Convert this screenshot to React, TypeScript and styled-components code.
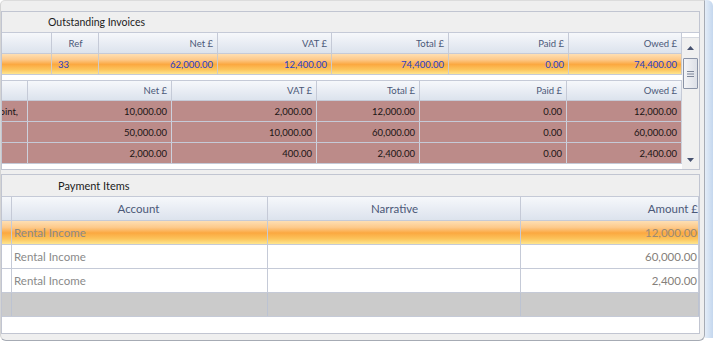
import React from 'react';
import styled, { createGlobalStyle } from 'styled-components';

type Kind = 'head' | 'sel' | 'plain' | 'rose' | 'blank';
type Align = 'left' | 'right' | 'center';

const line = '#c5cad7';

const backgrounds: Record<Kind, string> = {
  head: 'linear-gradient(#f6f8fb 0%, #e9edf4 50%, #dce3ed 100%)',
  sel: 'linear-gradient(#fedfb3 0%, #fdc98a 28%, #fba840 52%, #fcc45c 78%, #fee58f 100%)',
  plain: '#ffffff',
  rose: '#bc8b89',
  blank: '#cbcbcb',
};

const GlobalStyle = createGlobalStyle`
  html, body { margin: 0; padding: 0; background: #ffffff; }
  body { font-family: Lato, "Open Sans", sans-serif; }
`;

const Frame = styled.div`
  width: 713px;
  height: 342px;
  display: flex;
  align-items: flex-start;
  overflow: hidden;
  background: #ffffff;
`;

const Window = styled.div`
  box-sizing: border-box;
  width: 705px;
  height: 341px;
  background: #efefef;
  border-top: 1px solid #dcdcdc;
  border-left: 1px solid #d4d4d4;
  border-right: 1px solid #a6abb4;
  border-bottom: 1px solid #a6abb4;
  border-radius: 5px 0 6px 6px;
  padding: 10px 4px 0 0;
  display: flex;
  flex-direction: column;
`;

const SideStrip = styled.div`
  width: 8px;
  height: 338px;
  background: linear-gradient(90deg, #e4edf8, #c4d7ee);
  border-top-right-radius: 6px;
`;

const Group = styled.section<{ $h: number; $gap?: number }>`
  box-sizing: border-box;
  width: 699px;
  height: ${p => p.$h}px;
  margin-top: ${p => p.$gap ?? 0}px;
  border: 1px solid #c1c5d1;
  background: #efefef;
  display: flex;
  flex-direction: column;
`;

const GroupTitle = styled.div<{ $h: number; $indent: number; $size: number }>`
  height: ${p => p.$h}px;
  padding-left: ${p => p.$indent}px;
  display: flex;
  align-items: center;
  font-size: ${p => p.$size}px;
  color: #1c1c1c;
  flex-shrink: 0;
`;

const GridArea = styled.div`
  flex: 1;
  display: flex;
  border-top: 1px solid ${line};
  background: #ffffff;
  min-height: 0;
`;

const Table = styled.div<{ $size: number }>`
  flex: 1;
  display: flex;
  flex-direction: column;
  font-size: ${p => p.$size}px;
  min-width: 0;
`;

const Row = styled.div<{ $cols: string; $h: number; $kind: Kind; $ink?: string }>`
  box-sizing: border-box;
  display: grid;
  grid-template-columns: ${p => p.$cols};
  height: ${p => p.$h}px;
  flex-shrink: 0;
  border-bottom: 1px solid ${line};
  background: ${p => backgrounds[p.$kind]};
  color: ${p => p.$ink ?? '#1a1a1a'};
`;

const Cell = styled.div<{ $align?: Align; $pl?: number; $pr?: number; $edge?: string }>`
  box-sizing: border-box;
  display: flex;
  align-items: center;
  justify-content: ${p => (p.$align === 'right' ? 'flex-end' : p.$align === 'center' ? 'center' : 'flex-start')};
  padding: 0 ${p => p.$pr ?? 4}px 0 ${p => p.$pl ?? 5}px;
  border-right: 1px solid ${p => p.$edge ?? line};
  overflow: hidden;
  white-space: nowrap;
`;

const Amount = styled.span<{ $sel: boolean }>`
  color: ${p => (p.$sel ? '#9a8a76' : '#85807a')};
`;

const Detail = styled.div`
  flex: 1;
  padding-top: 5px;
  display: flex;
  flex-direction: column;
`;

const Nested = styled.div`
  border-top: 1px solid ${line};
  display: flex;
  flex-direction: column;
`;

const Filler = styled.div`
  flex: 1;
  background: #ffffff;
`;

const ScrollBar = styled.div`
  width: 17px;
  flex-shrink: 0;
  display: flex;
  flex-direction: column;
  background: #f0f0f0;
`;

const ScrollCap = styled.div`
  height: 4px;
  background: #ffffff;
  border-bottom: 1px solid #d6d9e0;
`;

const ScrollButton = styled.div<{ $h: number }>`
  height: ${p => p.$h}px;
  display: flex;
  align-items: center;
  justify-content: center;
  flex-shrink: 0;
`;

const Thumb = styled.div`
  box-sizing: border-box;
  height: 31px;
  margin: 0 1px;
  border: 1px solid #8a93a7;
  border-radius: 1px;
  background: linear-gradient(90deg, #f3f4f7, #dde0e7);
  display: flex;
  align-items: center;
  justify-content: center;
`;

const Track = styled.div`
  flex: 1;
`;

const Arrow = ({ down }: { down?: boolean }) => (
  <svg width="7" height="4" viewBox="0 0 7 4">
    <polygon points={down ? '0,0 7,0 3.5,4' : '0,4 7,4 3.5,0'} fill="#45506e" />
  </svg>
);

const Grip = () => (
  <svg width="7" height="6" viewBox="0 0 7 6">
    <rect x="0" y="0" width="7" height="1" fill="#7d8699" />
    <rect x="0" y="2.5" width="7" height="1" fill="#7d8699" />
    <rect x="0" y="5" width="7" height="1" fill="#7d8699" />
  </svg>
);

const invoiceCols = '50px 47px 119px 114px 117px 120px 113px';
const nestedCols = '26px 144px 145px 103px 147px 115px';
const paymentCols = '7px 259px 253px 178px';

const invoiceHead = ['', 'Ref', 'Net £', 'VAT £', 'Total £', 'Paid £', 'Owed £'];
const invoiceRow = ['', '33', '62,000.00', '12,400.00', '74,400.00', '0.00', '74,400.00'];

const nestedHead = ['', 'Net £', 'VAT £', 'Total £', 'Paid £', 'Owed £'];
const nestedRows = [
  ['point,', '10,000.00', '2,000.00', '12,000.00', '0.00', '12,000.00'],
  ['', '50,000.00', '10,000.00', '60,000.00', '0.00', '60,000.00'],
  ['', '2,000.00', '400.00', '2,400.00', '0.00', '2,400.00'],
];

const payments = [
  { account: 'Rental Income', amount: '12,000.00', kind: 'sel' as Kind },
  { account: 'Rental Income', amount: '60,000.00', kind: 'plain' as Kind },
  { account: 'Rental Income', amount: '2,400.00', kind: 'plain' as Kind },
];

const headInk = '#4b5878';

export default function App() {
  return (
    <Frame>
      <GlobalStyle />
      <Window>
        <Group $h={159}>
          <GroupTitle $h={20} $indent={46} $size={10.5}>Outstanding Invoices</GroupTitle>
          <GridArea>
            <Table $size={9.5}>
              <Row $cols={invoiceCols} $h={21} $kind="head" $ink={headInk}>
                {invoiceHead.map((h, i) => (
                  <Cell key={i} $align={i === 1 ? 'center' : 'right'}>{h}</Cell>
                ))}
              </Row>
              <Row $cols={invoiceCols} $h={21} $kind="sel" $ink="#2840c8">
                {invoiceRow.map((v, i) => (
                  <Cell key={i} $align={i === 1 ? 'left' : 'right'} $pl={6} $edge="#cfcbc8">{v}</Cell>
                ))}
              </Row>
              <Detail>
                <Nested>
                  <Row $cols={nestedCols} $h={20} $kind="head" $ink={headInk}>
                    {nestedHead.map((h, i) => (
                      <Cell key={i} $align="right">{h}</Cell>
                    ))}
                  </Row>
                  {nestedRows.map((r, ri) => (
                    <Row key={ri} $cols={nestedCols} $h={21} $kind="rose" $ink="#1a1414">
                      {r.map((v, i) => (
                        <Cell key={i} $align="right" $pr={i === 0 ? 9 : 4} $edge="#cdd1dc">{v}</Cell>
                      ))}
                    </Row>
                  ))}
                </Nested>
              </Detail>
            </Table>
            <ScrollBar>
              <ScrollCap />
              <ScrollButton $h={20}><Arrow /></ScrollButton>
              <Thumb><Grip /></Thumb>
              <Track />
              <ScrollButton $h={19}><Arrow down /></ScrollButton>
            </ScrollBar>
          </GridArea>
        </Group>

        <Group $h={160} $gap={4}>
          <GroupTitle $h={21} $indent={56} $size={11}>Payment Items</GroupTitle>
          <GridArea>
            <Table $size={11.5}>
              <Row $cols={paymentCols} $h={24} $kind="head" $ink={headInk}>
                <Cell />
                <Cell $align="center">Account</Cell>
                <Cell $align="center">Narrative</Cell>
                <Cell $align="right" $pr={0}>Amount £</Cell>
              </Row>
              {payments.map((p, i) => (
                <Row key={i} $cols={paymentCols} $h={24} $kind={p.kind} $ink="#8a8a8a">
                  <Cell />
                  <Cell $pl={5}>{p.account}</Cell>
                  <Cell />
                  <Cell $align="right" $pr={1}>
                    <Amount $sel={p.kind === 'sel'}>{p.amount}</Amount>
                  </Cell>
                </Row>
              ))}
              <Row $cols={paymentCols} $h={24} $kind="blank">
                <Cell $edge="#bcc3d2" />
                <Cell $edge="#bcc3d2" />
                <Cell $edge="#bcc3d2" />
                <Cell $edge="#bcc3d2" />
              </Row>
              <Filler />
            </Table>
          </GridArea>
        </Group>
      </Window>
      <SideStrip />
    </Frame>
  );
}
